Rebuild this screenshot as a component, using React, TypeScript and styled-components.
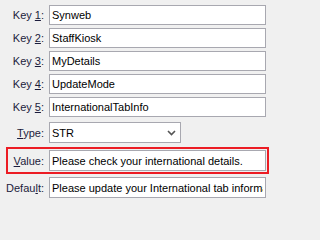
import React from 'react';
import styled, { createGlobalStyle } from 'styled-components';

const GlobalStyle = createGlobalStyle`
  html, body {
    margin: 0;
    padding: 0;
    background: #f0f0f0;
  }
  body {
    font-family: "Liberation Sans", Arial, sans-serif;
    font-size: 11px;
  }
`;

const Form = styled.div`
  width: 271px;
  height: 202px;
  box-sizing: border-box;
  padding: 5px 5px 0 0;
  display: flex;
  flex-direction: column;
  gap: 3px;
`;

const Row = styled.div<{ highlighted?: boolean; extraTop?: number }>`
  display: grid;
  grid-template-columns: ${props => props.highlighted ? '36px 1fr' : '44px 1fr'};
  column-gap: 5px;
  align-items: center;
  margin-top: ${props => props.extraTop || 0}px;
  ${props => props.highlighted && `
    margin-left: 6px;
    margin-right: -3px;
    border: 2px solid #ec1c24;
    padding: 1px 1px 1px 0;
  `}
`;

const Label = styled.label`
  text-align: right;
  color: #1c1c3c;
  white-space: nowrap;
  u {
    text-decoration: underline;
    text-underline-offset: 1px;
  }
`;

const TextBox = styled.input<{ tall?: boolean }>`
  box-sizing: border-box;
  width: 100%;
  height: ${props => props.tall ? 21 : 20}px;
  margin: 0;
  padding: 0 2px;
  border: 1px solid #a8a8b0;
  background: #ffffff;
  color: #000000;
  font-family: "Liberation Sans", Arial, sans-serif;
  font-size: 11px;
  outline: none;
`;

const Combo = styled.div`
  box-sizing: border-box;
  width: 132px;
  height: 21px;
  border: 1px solid #a8a8b0;
  background: #ffffff;
  display: flex;
  align-items: center;
  justify-content: space-between;
  padding: 0 4px 0 2px;
  color: #000000;
`;

const Chevron = () => (
  <svg width="9" height="6" viewBox="0 0 9 6">
    <polyline points="1,1 4.5,4.5 8,1" fill="none" stroke="#555" strokeWidth="1.6" />
  </svg>
);

const keys = ['Synweb', 'StaffKiosk', 'MyDetails', 'UpdateMode', 'InternationalTabInfo'];

export default function App() {
  return (
    <>
      <GlobalStyle />
      <Form>
        {keys.map((k, i) => (
          <Row key={k}>
            <Label>Key <u>{i + 1}</u>:</Label>
            <TextBox readOnly defaultValue={k} />
          </Row>
        ))}
        <Row extraTop={2}>
          <Label><u>T</u>ype:</Label>
          <Combo>
            <span>STR</span>
            <Chevron />
          </Combo>
        </Row>
        <Row highlighted extraTop={1}>
          <Label><u>V</u>alue:</Label>
          <TextBox tall readOnly defaultValue="Please check your international details." />
        </Row>
        <Row>
          <Label>Defau<u>l</u>t:</Label>
          <TextBox tall readOnly defaultValue="Please update your International tab information" />
        </Row>
      </Form>
    </>
  );
}
